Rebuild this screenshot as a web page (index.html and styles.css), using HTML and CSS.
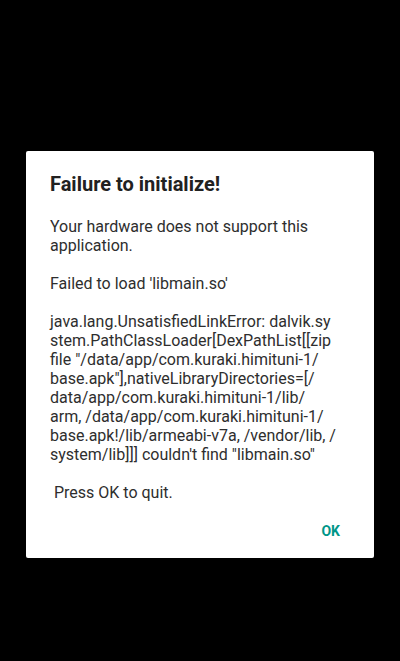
FILE: index.html
```html
<!DOCTYPE html>
<html>
<head>
<meta charset="utf-8">
<link rel="stylesheet" href="styles.css">
</head>
<body>
<div class="dialog">
<div class="title">Failure to initialize!</div>
<div class="message">Your hardware does not support this
application.

Failed to load 'libmain.so'

java.lang.UnsatisfiedLinkError: dalvik.sy
stem.PathClassLoader[DexPathList[[zip
file "/data/app/com.kuraki.himituni-1/
base.apk"],nativeLibraryDirectories=[/
data/app/com.kuraki.himituni-1/lib/
arm, /data/app/com.kuraki.himituni-1/
base.apk!/lib/armeabi-v7a, /vendor/lib, /
system/lib]]] couldn't find "libmain.so"

 Press OK to quit.</div>
<div class="buttons"><span class="btn">OK</span></div>
</div>
</body>
</html>
```
FILE: styles.css
```css
html, body {
  margin: 0;
  padding: 0;
  background: #000;
}
body {
  width: 400px;
  height: 661px;
  overflow: hidden;
  font-family: Roboto, "Noto Sans", sans-serif;
}
.dialog {
  margin: 151px 0 0 26px;
  width: 348px;
  height: 407px;
  background: #fff;
  border-radius: 2px;
  display: flex;
  flex-direction: column;
  box-sizing: border-box;
}
.title {
  padding: 21px 24px 0;
  font-size: 20px;
  line-height: 24px;
  font-weight: 700;
  color: #212121;
}
.message {
  margin-top: 21px;
  padding: 0 24px;
  font-size: 16px;
  line-height: 19px;
  color: #2e2e2e;
  white-space: pre;
}
.buttons {
  margin-top: auto;
  display: flex;
  justify-content: flex-end;
  padding: 0 34px 19px 0;
}
.btn {
  font-size: 14px;
  line-height: 16px;
  font-weight: 700;
  color: #009688;
}
```
